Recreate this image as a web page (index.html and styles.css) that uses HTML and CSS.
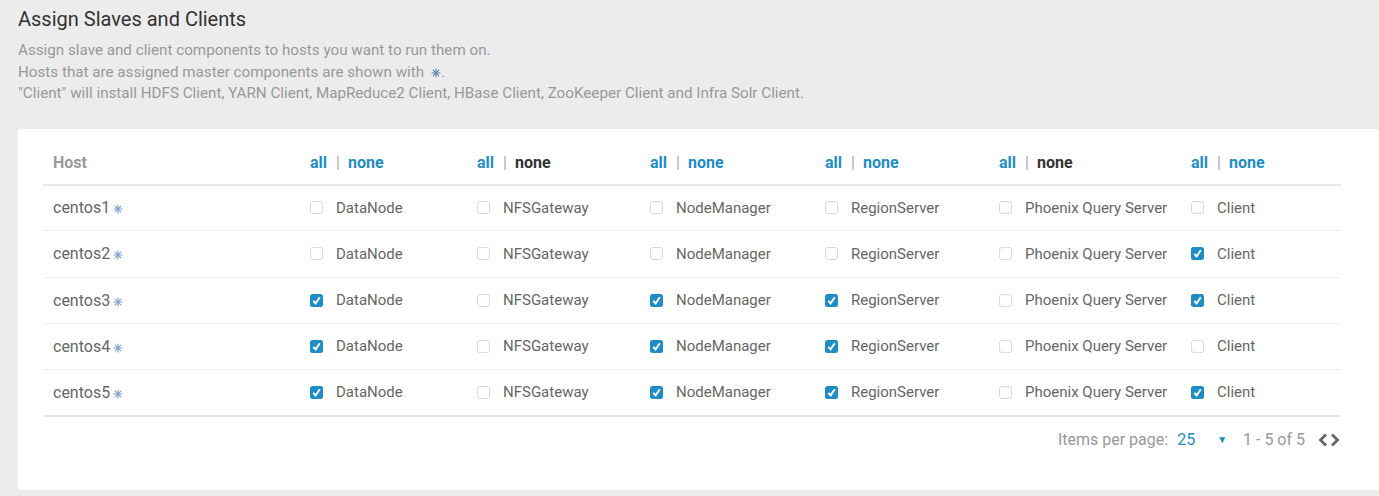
FILE: index.html
```html
<!DOCTYPE html>
<html>
<head>
<meta charset="utf-8">
<link rel="stylesheet" href="styles.css">
</head>
<body>
<div class="page">
  <h2 class="title">Assign Slaves and Clients</h2>
  <div class="desc">
    <p>Assign slave and client components to hosts you want to run them on.</p>
    <p>Hosts that are assigned master components are shown with <svg class="star" viewBox="0 0 10 10"><g stroke="#5b7fb3" stroke-width="1.1" stroke-linecap="round"><line x1="5" y1="1" x2="5" y2="9"/><line x1="1" y1="5" x2="9" y2="5"/><line x1="2.2" y1="2.2" x2="7.8" y2="7.8"/><line x1="7.8" y1="2.2" x2="2.2" y2="7.8"/></g></svg>.</p>
    <p>"Client" will install HDFS Client, YARN Client, MapReduce2 Client, HBase Client, ZooKeeper Client and Infra Solr Client.</p>
  </div>
  <div class="card">
    <table class="grid">
      <colgroup>
        <col class="c-host"><col class="c1"><col class="c2"><col class="c3"><col class="c4"><col class="c5"><col class="c6">
      </colgroup>
      <thead>
        <tr>
          <th class="host-h">Host</th>
          <th><a class="lnk">all</a><span class="sep">|</span><a class="lnk">none</a></th>
          <th><a class="lnk">all</a><span class="sep">|</span><span class="off">none</span></th>
          <th><a class="lnk">all</a><span class="sep">|</span><a class="lnk">none</a></th>
          <th><a class="lnk">all</a><span class="sep">|</span><a class="lnk">none</a></th>
          <th><a class="lnk">all</a><span class="sep">|</span><span class="off">none</span></th>
          <th><a class="lnk">all</a><span class="sep">|</span><a class="lnk">none</a></th>
        </tr>
      </thead>
      <tbody id="rows"></tbody>
    </table>
    <div class="pager">
      <span class="ipp">Items per page:</span>
      <span class="num">25</span>
      <span class="caret">&#9660;</span>
      <span class="range">1 - 5 of 5</span>
      <span class="arrows">
        <svg viewBox="0 0 12 16" class="arr"><path d="M9 2.5 L3.5 8 L9 13.5" fill="none" stroke="#666" stroke-width="2.8"/></svg>
        <svg viewBox="0 0 12 16" class="arr"><path d="M3 2.5 L8.5 8 L3 13.5" fill="none" stroke="#666" stroke-width="2.8"/></svg>
      </span>
    </div>
  </div>
</div>
<script>
var data = [
  ["centos1",[0,0,0,0,0,0]],
  ["centos2",[0,0,0,0,0,1]],
  ["centos3",[1,0,1,1,0,1]],
  ["centos4",[1,0,1,1,0,0]],
  ["centos5",[1,0,1,1,0,1]]
];
var names = ["DataNode","NFSGateway","NodeManager","RegionServer","Phoenix Query Server","Client"];
var star = '<svg class="star" viewBox="0 0 10 10"><g stroke="#7f9cc4" stroke-width="1.1" stroke-linecap="round"><line x1="5" y1="1" x2="5" y2="9"/><line x1="1" y1="5" x2="9" y2="5"/><line x1="2.2" y1="2.2" x2="7.8" y2="7.8"/><line x1="7.8" y1="2.2" x2="2.2" y2="7.8"/></g></svg>';
var chk = '<svg viewBox="0 0 13 13" class="cb on"><rect x="0" y="0" width="13" height="13" rx="2.5" fill="#1f8dc5"/><path d="M3.3 6.8 L5.6 9.4 L9.8 3.2" fill="none" stroke="#fff" stroke-width="1.9"/></svg>';
var unchk = '<svg viewBox="0 0 13 13" class="cb"><rect x="0.5" y="0.5" width="12" height="12" rx="2.5" fill="#fff" stroke="#d9d9d9"/></svg>';
var html = "";
data.forEach(function(r){
  html += '<tr><td class="host">' + r[0] + star + '</td>';
  r[1].forEach(function(v,i){
    html += '<td><label class="opt">' + (v ? chk : unchk) + '<span>' + names[i] + '</span></label></td>';
  });
  html += '</tr>';
});
document.getElementById("rows").innerHTML = html;
</script>
</body>
</html>
```

FILE: styles.css
```css
* { box-sizing: border-box; }
html, body { margin: 0; padding: 0; }
body {
  background: #ececec;
  font-family: Roboto, "Liberation Sans", Arial, sans-serif;
  width: 1379px;
  height: 496px;
  overflow: hidden;
}
.page { padding: 0 0 0 18px; }
.title {
  margin: 0;
  padding-top: 6px;
  font-size: 20px;
  font-weight: 400;
  color: #333;
  line-height: 26px;
}
.desc {
  margin-top: 8px;
  color: #999;
  font-size: 15.2px;
  line-height: 21.5px;
}
.desc p { margin: 0; }
.star { width: 10px; height: 10px; vertical-align: -1px; margin-left: 3px; }
.card {
  margin-top: 24px;
  background: #fff;
  border-radius: 3px;
  height: 361px;
  padding: 12px 38px 0 25px;
}
.grid {
  width: 1298px;
  border-collapse: collapse;
  table-layout: fixed;
}
.c-host { width: 257px; }
.c1 { width: 167px; }
.c2 { width: 173px; }
.c3 { width: 175px; }
.c4 { width: 174px; }
.c5 { width: 192px; }
.c6 { width: 160px; }
th {
  text-align: left;
  font-size: 16px;
  font-weight: 700;
  height: 44px;
  padding: 0 0 0 10px;
  border-bottom: 2px solid #e8e8e8;
  white-space: nowrap;
}
.host-h { color: #999; }
.lnk { color: #1f8dc5; }
.off { color: #333; }
.sep { color: #aaa; font-weight: 400; margin: 0 8px 0 9px; }
td {
  height: 46.25px;
  padding: 0 0 0 10px;
  border-bottom: 1px solid #eee;
  font-size: 15px;
  color: #666;
  white-space: nowrap;
}
tbody tr:last-child td { border-bottom: 2px solid #e8e8e8; }
td.host { font-size: 16px; }
.opt { display: flex; align-items: center; }
.cb { width: 13px; height: 13px; flex: none; margin-right: 13px; }
.pager {
  display: flex;
  align-items: center;
  justify-content: flex-end;
  height: 46px;
  padding-top: 0;
  width: 1298px;
  font-size: 16px;
  color: #999;
}
.num { color: #1f8dc5; margin-left: 9px; }
.caret { color: #1f8dc5; font-size: 10px; margin-left: 22px; }
.range { margin-left: 16px; }
.arrows { display: flex; margin-left: 12px; }
.arr { width: 12px; height: 16px; }
```
